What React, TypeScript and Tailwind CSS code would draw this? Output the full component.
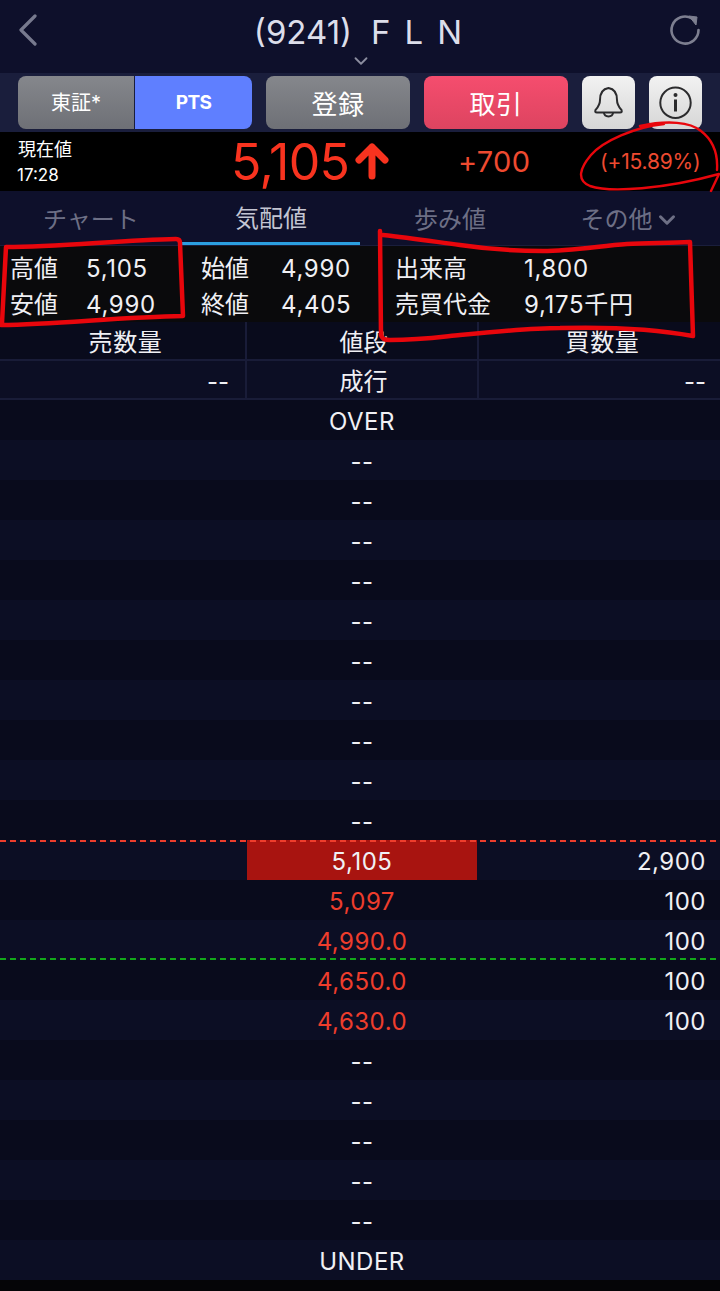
import React from 'react';
import { ChevronDown } from 'lucide-react';

type Row = { price: string; buy?: string; kind?: 'current' | 'red' };

const rows: Row[] = [
  { price: 'OVER' },
  ...Array.from({ length: 10 }, () => ({ price: '--' })),
  { price: '5,105', buy: '2,900', kind: 'current' as const },
  { price: '5,097', buy: '100', kind: 'red' as const },
  { price: '4,990.0', buy: '100', kind: 'red' as const },
  { price: '4,650.0', buy: '100', kind: 'red' as const },
  { price: '4,630.0', buy: '100', kind: 'red' as const },
  ...Array.from({ length: 5 }, () => ({ price: '--' })),
  { price: 'UNDER' },
];

function StatPair({ label, value, labelWidth }: { label: string; value: string; labelWidth: string }) {
  return (
    <div className="flex items-center h-9">
      <span className={labelWidth}>{label}</span>
      <span className="tracking-[0.7px]">{value}</span>
    </div>
  );
}

// hand drawn red marks that lie over the screen
function Annotations() {
  return (
    <svg className="absolute left-0 top-0 pointer-events-none" width="720" height="1291" fill="none" stroke="#e8060c" strokeLinecap="round" strokeLinejoin="round">
      <path strokeWidth="2.4" d="M664 124C635 127 603 141 591 155C580 168 576 180 590 186C610 193 665 189 719 174L711 191M640 126C668 120 690 122 701 131C714 141 718 155 717 170" />
      <path strokeWidth="4.5" d="M2 323L6 247C60 247 120 240 176 239Q180 239 180 243L183 316C120 317 60 324 1 325" />
      <path strokeWidth="4.5" d="M380 231L381 335Q382 340 390 340C420 340 440 337 460 335C500 331 530 328 560 328C600 327 650 328 693 336L690 242C670 243 650 243 627 244C600 246 570 251 543 251C510 251 480 248 460 245C430 241 410 238 383 235" />
    </svg>
  );
}

export default function App() {
  return (
    <div className="relative w-[720px] h-[1291px] overflow-hidden bg-[#050507] text-white font-['Inter','Noto_Sans_CJK_JP',sans-serif]">
      {/* Title bar */}
      <header className="relative flex items-start justify-between h-[73px] pl-[19px] pr-[10px] pt-[14px] bg-[#0e102b]">
        <svg width="18" height="32" viewBox="0 0 18 32" fill="none" stroke="#777a8e" strokeWidth="3.2" strokeLinecap="round" strokeLinejoin="round">
          <path d="M16 2L2 16L16 30" />
        </svg>
        <div className="absolute left-0 right-0 top-[10px] flex justify-center text-[33px] leading-[44px] text-[#dcdeea]">
          <span className="ml-[-2px]">(9241)</span>
          <span className="ml-[19px] mr-[-12px] tracking-[14px]">FLN</span>
        </div>
        <ChevronDown size={22} strokeWidth={2} className="absolute left-[350px] top-[50px] text-[#8b8d9f]" />
        <svg width="50" height="50" viewBox="0 0 50 50" fill="none" className="-mt-[9px]">
          <path d="M32 13.5A13.5 13.5 0 1 0 38.5 25" stroke="#7d7f90" strokeWidth="2.6" strokeLinecap="round" />
          <path d="M29 11L37 12L36 20Z" fill="#7d7f90" stroke="#7d7f90" strokeWidth="1" strokeLinejoin="round" />
        </svg>
      </header>

      {/* Buttons */}
      <div className="flex items-center h-[59px] pl-[18px] bg-[#1a1e3c]">
        <div className="flex w-[234px] h-[53px] rounded-lg overflow-hidden">
          <button className="w-[117px] pt-[1px] text-[20px] bg-gradient-to-b from-[#85878c] to-[#6e7076] border-r border-[#1a1e3c]">東証*</button>
          <button className="flex-1 pt-[2px] text-[19px] font-bold tracking-[-0.6px] bg-[#5f7fff]">PTS</button>
        </div>
        <button className="ml-[14px] w-[144px] h-[53px] pt-[3px] rounded-lg text-[26px] tracking-[0.5px] bg-gradient-to-b from-[#85878c] to-[#6e7076]">登録</button>
        <button className="ml-[14px] w-[144px] h-[53px] pt-[3px] rounded-lg text-[26px] tracking-[0.5px] bg-gradient-to-b from-[#f54d6e] to-[#dd4460]">取引</button>
        <button className="ml-[14px] w-[53px] h-[53px] rounded-lg bg-gradient-to-b from-[#f2f2f2] to-[#d6d6d6]">
          <svg width="53" height="53" viewBox="2 1 53 53" fill="none" stroke="#2b2b2d" strokeWidth="2" strokeLinejoin="round" strokeLinecap="round">
            <path d="M28.5 13C22 14 20 19 20 25C20 30 18 32 15.5 35Q14.5 37.5 17 37.5H40Q42.5 37.5 41.5 35C39 32 37 30 37 25C37 19 35 14 28.5 13Z" />
            <path d="M24 38C24.5 42.5 32.5 42.5 33 38" />
          </svg>
        </button>
        <button className="ml-[14px] w-[53px] h-[53px] rounded-lg bg-gradient-to-b from-[#f2f2f2] to-[#d6d6d6]">
          <svg width="53" height="53" viewBox="0 0 53 53" fill="none" stroke="#2b2b2d">
            <circle cx="26.5" cy="26.7" r="15.2" strokeWidth="2" />
            <circle cx="26.5" cy="19" r="2" fill="#2b2b2d" stroke="none" />
            <path d="M26.5 23.5V35.5" strokeWidth="3" />
          </svg>
        </button>
      </div>

      {/* Current price */}
      <div className="relative flex h-[59px] bg-black">
        <div className="pl-[18px] pt-[5px] text-[18px] leading-[26px]">
          <div>現在値</div>
          <div className="text-[17px] -ml-[1px] -mt-[1px]">17:28</div>
        </div>
        <div className="absolute left-[231px] top-[5px] flex items-center text-[#f8331f]">
          <span className="w-[121px] text-[50px] leading-[50px] tracking-[-0.6px]">5,105</span>
          <svg width="40" height="46" viewBox="352 139 40 46" fill="none" stroke="#f8331f" strokeWidth="7" strokeLinecap="round" strokeLinejoin="round">
            <path d="M372 176V147M359 160L372 147L385 160" />
          </svg>
        </div>
        <span className="absolute left-[458px] top-[14px] text-[29px] leading-[32px] tracking-[0.3px] text-[#ee4a30]">+700</span>
        <span className="absolute left-[600px] top-[16px] text-[21px] leading-[28px] tracking-[-0.2px] text-[#ee4a30]">(+15.89%)</span>
      </div>

      {/* Tabs */}
      <nav className="grid grid-cols-[182px_178px_180px_180px] h-[54px] bg-[#0e102b] text-[24px] text-[#6d6f85]">
        <div className="flex items-center justify-center pt-[7px] pb-[3px]">チャート</div>
        <div className="flex items-center justify-center pt-[7px] pb-[3px] text-[#c3c5d2] border-b-[3px] border-[#2b9fe0]">気配値</div>
        <div className="flex items-center justify-center pt-[7px] pb-[3px]">歩み値</div>
        <div className="flex items-center justify-center pt-[7px] pb-[3px]">
          その他
          <ChevronDown size={26} strokeWidth={2.8} className="ml-[1px]" />
        </div>
      </nav>

      {/* High / low / volume */}
      <section className="flex h-[77px] pt-[5px] bg-[#0a0a0c] border-t border-[#1a1e3c] text-[24px] text-[#f0f0f4]">
        <div className="w-[201px] pl-[10px]">
          <StatPair label="高値" value="5,105" labelWidth="w-[76px]" />
          <StatPair label="安値" value="4,990" labelWidth="w-[76px]" />
        </div>
        <div className="w-[195px]">
          <StatPair label="始値" value="4,990" labelWidth="w-[80px]" />
          <StatPair label="終値" value="4,405" labelWidth="w-[80px]" />
        </div>
        <div className="-ml-[1px]">
          <StatPair label="出来高" value="1,800" labelWidth="w-[129px]" />
          <StatPair label="売買代金" value="9,175千円" labelWidth="w-[129px]" />
        </div>
      </section>

      {/* Order book header */}
      <div className="grid grid-cols-[247px_232px_241px] h-[39px] bg-[#090b1c] text-[24px] text-[#f0f0f4] border-b-2 border-[#191c38]">
        <div className="flex items-center justify-center pt-[3px] pl-[6px] tracking-[0.6px] border-r-2 border-[#191c38]">売数量</div>
        <div className="flex items-center justify-center pt-[3px] pl-[3px] border-r-2 border-[#191c38]">値段</div>
        <div className="flex items-center justify-center pt-[3px] pl-[6px] tracking-[0.6px]">買数量</div>
      </div>
      <div className="grid grid-cols-[247px_232px_241px] h-[39px] bg-[#0c0e24] text-[24px] text-[#f0f0f4] border-b-2 border-[#191c38]">
        <div className="flex items-center justify-end pt-[3px] pr-[16px] border-r-2 border-[#191c38]">--</div>
        <div className="flex items-center justify-center pt-[3px] pl-[3px] border-r-2 border-[#191c38]">成行</div>
        <div className="flex items-center justify-end pt-[3px] pr-[14px]">--</div>
      </div>

      {/* Order book rows */}
      {rows.map((row, i) => (
        <div
          key={i}
          className={`relative grid grid-cols-[247px_230px_243px] h-10 text-[24px] text-[#f0f0f4] ${i % 2 === 0 ? 'bg-[#090b1c]' : 'bg-[#0c0e24]'}`}
        >
          <div />
          <div
            className={`flex items-center justify-center pt-[4px] tracking-[0.5px] ${row.kind === 'current' ? 'bg-[#a81410]' : ''} ${row.kind === 'red' ? 'text-[#ee3d2c]' : ''}`}
          >
            {row.price}
          </div>
          <div className="flex items-center justify-end pt-[4px] pr-[14px] tracking-[0.5px]">{row.buy}</div>
          {row.kind === 'current' && (
            <div className="absolute left-0 right-0 top-0 h-[2px] bg-[repeating-linear-gradient(90deg,#ee3d2c_0_6px,transparent_6px_10px)]" />
          )}
          {row.price === '4,990.0' && (
            <div className="absolute left-0 right-0 bottom-0 h-[2px] bg-[repeating-linear-gradient(90deg,#13a81a_0_6px,transparent_6px_10px)]" />
          )}
        </div>
      ))}

      <Annotations />
    </div>
  );
}
